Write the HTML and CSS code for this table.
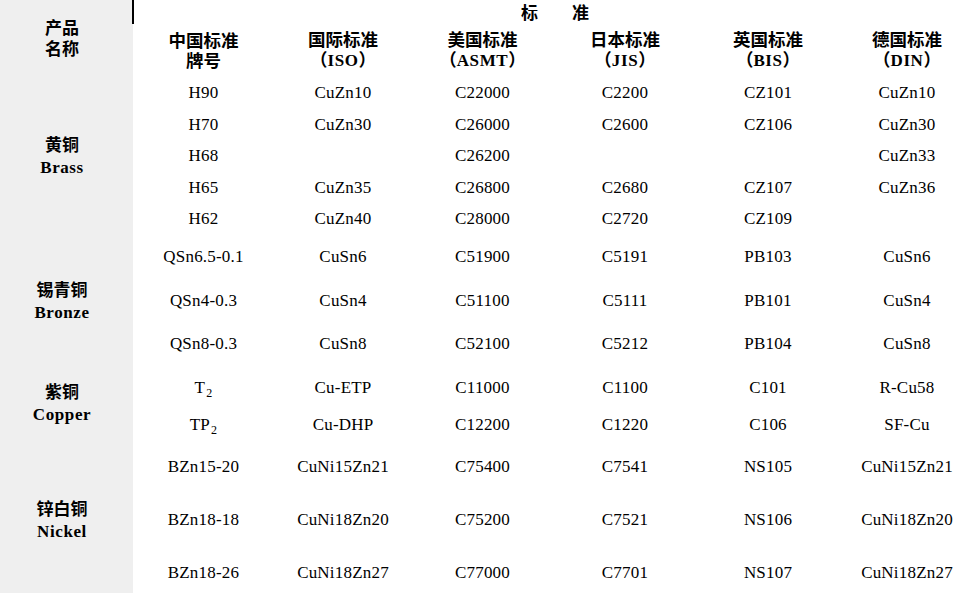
FILE: index.html
```html
<!DOCTYPE html>
<html lang="zh-CN">
<head>
<meta charset="utf-8">
<title>铜合金牌号对照</title>
<link rel="stylesheet" href="styles.css">
</head>
<body>
<div class="sheet">
  <div class="corner"><div class="t">产品<br>名称</div></div>
  <div class="std"><div class="t">标　　准</div></div>
  <div class="hd"><div class="t">中国标准<br>牌号</div></div>
  <div class="hd"><div class="t">国际标准<br>（<span class="lat">ISO</span>）</div></div>
  <div class="hd"><div class="t">美国标准<br>（<span class="lat">ASMT</span>）</div></div>
  <div class="hd"><div class="t">日本标准<br>（<span class="lat">JIS</span>）</div></div>
  <div class="hd"><div class="t">英国标准<br>（<span class="lat">BIS</span>）</div></div>
  <div class="hd"><div class="t">德国标准<br>（<span class="lat">DIN</span>）</div></div>

  <div class="grp span5"><div class="t">黄铜<br><span class="lat">Brass</span></div></div>
  <div class="c">H90</div><div class="c">CuZn10</div><div class="c">C22000</div><div class="c">C2200</div><div class="c">CZ101</div><div class="c">CuZn10</div>
  <div class="c">H70</div><div class="c">CuZn30</div><div class="c">C26000</div><div class="c">C2600</div><div class="c">CZ106</div><div class="c">CuZn30</div>
  <div class="c">H68</div><div class="c"></div><div class="c">C26200</div><div class="c"></div><div class="c"></div><div class="c">CuZn33</div>
  <div class="c">H65</div><div class="c">CuZn35</div><div class="c">C26800</div><div class="c">C2680</div><div class="c">CZ107</div><div class="c">CuZn36</div>
  <div class="c">H62</div><div class="c">CuZn40</div><div class="c">C28000</div><div class="c">C2720</div><div class="c">CZ109</div><div class="c"></div>

  <div class="grp span3"><div class="t">锡青铜<br><span class="lat">Bronze</span></div></div>
  <div class="c">QSn6.5-0.1</div><div class="c">CuSn6</div><div class="c">C51900</div><div class="c">C5191</div><div class="c">PB103</div><div class="c">CuSn6</div>
  <div class="c">QSn4-0.3</div><div class="c">CuSn4</div><div class="c">C51100</div><div class="c">C5111</div><div class="c">PB101</div><div class="c">CuSn4</div>
  <div class="c">QSn8-0.3</div><div class="c">CuSn8</div><div class="c">C52100</div><div class="c">C5212</div><div class="c">PB104</div><div class="c">CuSn8</div>

  <div class="grp span2"><div class="t">紫铜<br><span class="lat">Copper</span></div></div>
  <div class="c"><span>T<sub>2</sub></span></div><div class="c">Cu-ETP</div><div class="c">C11000</div><div class="c">C1100</div><div class="c">C101</div><div class="c">R-Cu58</div>
  <div class="c"><span>TP<sub>2</sub></span></div><div class="c">Cu-DHP</div><div class="c">C12200</div><div class="c">C1220</div><div class="c">C106</div><div class="c">SF-Cu</div>

  <div class="grp span3"><div class="t">锌白铜<br><span class="lat">Nickel</span></div></div>
  <div class="c">BZn15-20</div><div class="c">CuNi15Zn21</div><div class="c">C75400</div><div class="c">C7541</div><div class="c">NS105</div><div class="c">CuNi15Zn21</div>
  <div class="c">BZn18-18</div><div class="c">CuNi18Zn20</div><div class="c">C75200</div><div class="c">C7521</div><div class="c">NS106</div><div class="c">CuNi18Zn20</div>
  <div class="c">BZn18-26</div><div class="c">CuNi18Zn27</div><div class="c">C77000</div><div class="c">C7701</div><div class="c">NS107</div><div class="c">CuNi18Zn27</div>
</div>
</body>
</html>
```
FILE: styles.css
```css
html, body {
  margin: 0;
  padding: 0;
  background: #ffffff;
  overflow: hidden;
}

body {
  width: 970px;
  height: 593px;
  color: #000000;
  font-family: "Liberation Serif", "Noto Sans CJK SC", serif;
}

.sheet {
  display: grid;
  width: 975px;
  grid-template-columns: 133px 141px 138px 141px 144px 142px 136px;
  grid-template-rows: 24px 53px 32px 31px 32px 31px 32px 44px 43px 44px 44px 30px 54px 52px 54px;
}

.t {
  text-align: center;
}

.corner,
.grp {
  background: #efefef;
  display: flex;
  align-items: center;
  justify-content: center;
  padding-right: 9px;
  font-family: "Noto Sans CJK SC", sans-serif;
  font-weight: 700;
  font-size: 17px;
}

.corner {
  grid-row: span 2;
  line-height: 21px;
  padding-bottom: 3px;
}

.grp {
  line-height: 22px;
}

.span5 { grid-row: span 5; }
.span3 { grid-row: span 3; }
.span2 { grid-row: span 2; }

.std {
  grid-column: span 6;
  margin-left: -1px;
  border-left: 2px solid #000000;
  display: flex;
  align-items: center;
  justify-content: center;
  font-family: "Noto Sans CJK SC", sans-serif;
  font-weight: 700;
  font-size: 17px;
  line-height: 22px;
  padding-left: 1px;
}

.hd {
  display: flex;
  align-items: center;
  justify-content: center;
  font-family: "Noto Sans CJK SC", sans-serif;
  font-weight: 700;
  font-size: 17.5px;
  line-height: 20px;
  padding-bottom: 2px;
}

.lat {
  font-family: "Liberation Serif", serif;
  font-size: 17px;
  font-weight: 700;
  letter-spacing: 0.6px;
}

.c {
  display: flex;
  align-items: center;
  justify-content: center;
  font-family: "Liberation Serif", serif;
  font-size: 17px;
  letter-spacing: 0.2px;
  white-space: nowrap;
}

.c sub {
  font-size: 12px;
  line-height: 0;
  vertical-align: -4px;
  margin-left: 1px;
}
```
